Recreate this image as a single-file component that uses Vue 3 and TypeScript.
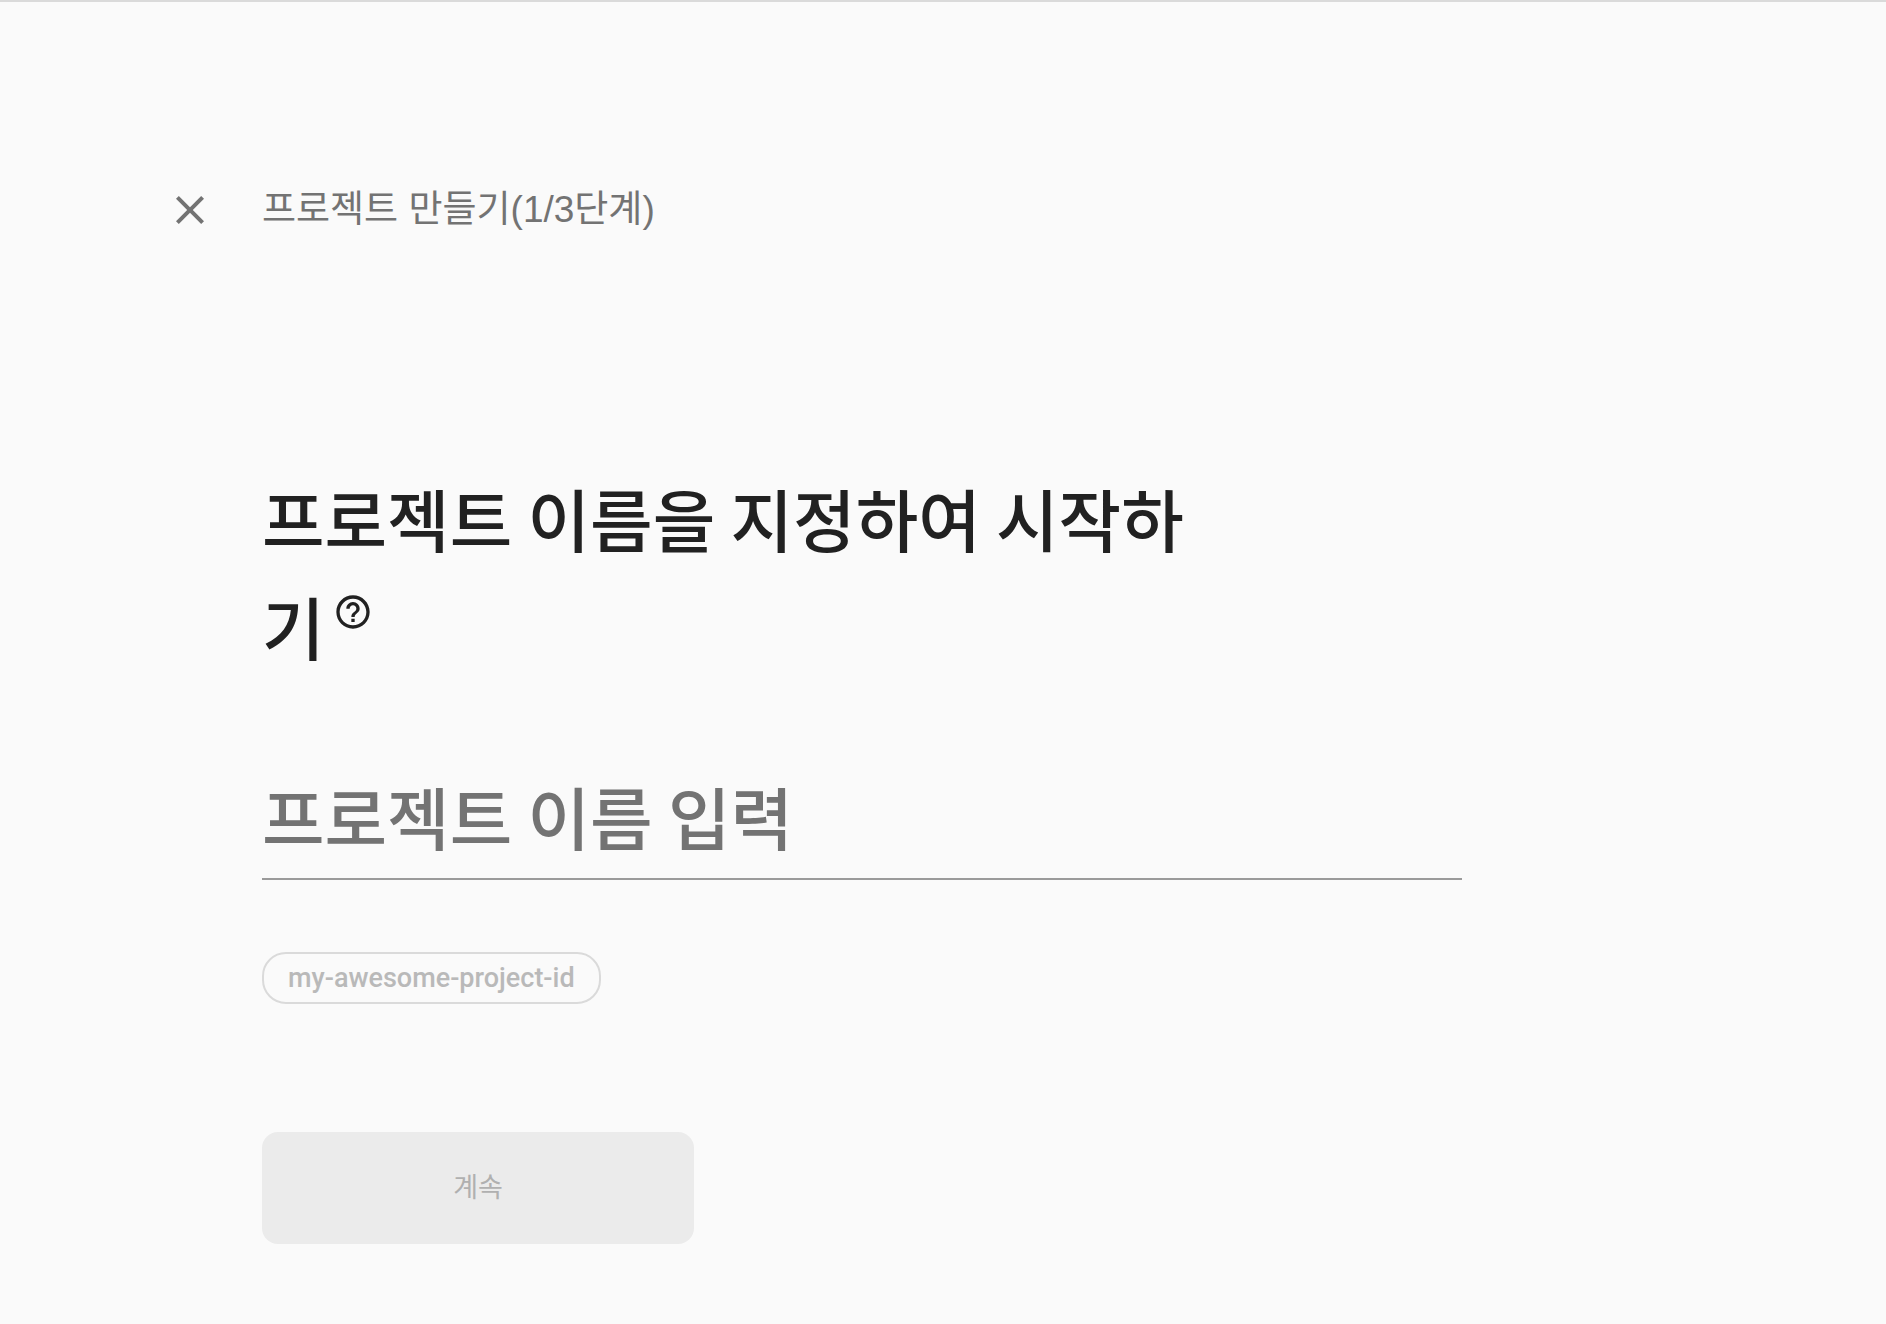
<script setup lang="ts">
import { computed, ref } from 'vue'

const step = ref(1)
const totalSteps = 3
const projectName = ref('')

const canContinue = computed(() => projectName.value.trim().length > 0)
const projectId = computed(
  () =>
    projectName.value
      .trim()
      .toLowerCase()
      .replace(/[^a-z0-9]+/g, '-') || 'my-awesome-project-id'
)
</script>

<template>
  <main class="page">
    <header class="topbar">
      <button class="icon-button close" type="button" aria-label="닫기">
        <svg viewBox="0 0 24 24" aria-hidden="true">
          <path
            d="M19 6.41L17.59 5 12 10.59 6.41 5 5 6.41 10.59 12 5 17.59 6.41 19 12 13.41 17.59 19 19 17.59 13.41 12z"
          />
        </svg>
      </button>
      <p class="step">프로젝트 만들기({{ step }}/{{ totalSteps }}단계)</p>
    </header>

    <form class="form" @submit.prevent>
      <h1 class="title">
        <label for="project-name">프로젝트 이름을 지정하여 시작하기</label
        ><button class="icon-button help" type="button" aria-label="도움말">
          <svg viewBox="0 0 24 24" aria-hidden="true">
            <path
              d="M11 18h2v-2h-2v2zm1-16C6.48 2 2 6.48 2 12s4.48 10 10 10 10-4.48 10-10S17.52 2 12 2zm0 18c-4.41 0-8-3.59-8-8s3.59-8 8-8 8 3.59 8 8-3.59 8-8 8zm0-14c-2.21 0-4 1.79-4 4h2c0-1.1.9-2 2-2s2 .9 2 2c0 2-3 1.75-3 5h2c0-2.25 3-2.5 3-5 0-2.21-1.79-4-4-4z"
            />
          </svg>
        </button>
      </h1>
      <input
        id="project-name"
        v-model="projectName"
        class="name"
        type="text"
        placeholder="프로젝트 이름 입력"
        autocomplete="off"
      />
      <button class="chip" type="button" disabled>{{ projectId }}</button>
      <button class="continue" type="submit" :disabled="!canContinue">계속</button>
    </form>
  </main>
</template>

<style>
body {
  background: #fafafa;
}
</style>

<style scoped>
.page {
  box-sizing: border-box;
  min-height: 100vh;
  padding: 168px 166px 80px;
  border-top: 2px solid #dadada;
  background: #fafafa;
  color: #212121;
  font-family: Roboto, 'Noto Sans CJK KR', sans-serif;
}

.topbar {
  display: flex;
  align-items: center;
  gap: 48px;
  height: 80px;
  color: #737373;
}

.step {
  margin: 0;
  font-family: 'Liberation Sans', 'Noto Sans CJK KR', sans-serif;
  font-size: 37px;
  line-height: 56px;
}

.icon-button {
  padding: 0;
  border: 0;
  background: none;
  color: inherit;
  cursor: pointer;
}

.icon-button svg {
  display: block;
  width: 100%;
  height: 100%;
  fill: currentColor;
}

.close {
  flex: none;
  width: 48px;
  height: 48px;
}

.form {
  display: flex;
  flex-direction: column;
  align-items: flex-start;
  max-width: 1200px;
  margin: 214px 0 0 96px;
}

.title {
  max-width: 960px;
  margin: 0;
  font-family: 'Noto Sans CJK KR', sans-serif;
  font-size: 68px;
  font-weight: 500;
  line-height: 108px;
}

.help {
  width: 40px;
  height: 40px;
  margin: 20px 0 0 8px;
  vertical-align: top;
}

.name {
  box-sizing: border-box;
  width: 100%;
  height: 124px;
  margin-top: 76px;
  padding: 0 0 4px;
  border: 0;
  border-bottom: 2px solid #9a9a9a;
  border-radius: 0;
  outline: 0;
  background: none;
  color: #212121;
  font-family: 'Noto Sans CJK KR', sans-serif;
  font-size: 68px;
  font-weight: 500;
}

.name::placeholder {
  color: #737373;
  opacity: 1;
}

.chip {
  height: 52px;
  margin-top: 72px;
  padding: 0 24px;
  border: 2px solid #dadada;
  border-radius: 24px;
  background: none;
  color: #b9b9b9;
  font-family: Roboto, sans-serif;
  font-size: 27px;
  font-weight: 500;
}

.continue {
  width: 432px;
  max-width: 100%;
  height: 112px;
  margin-top: 128px;
  padding: 0 0 6px;
  border: 0;
  border-radius: 16px;
  background: #1a73e8;
  color: #ffffff;
  font-family: 'Noto Sans CJK KR', sans-serif;
  font-size: 27px;
  font-weight: 400;
}

.continue:disabled {
  background: #ebebeb;
  color: #b0b0b0;
}
</style>
